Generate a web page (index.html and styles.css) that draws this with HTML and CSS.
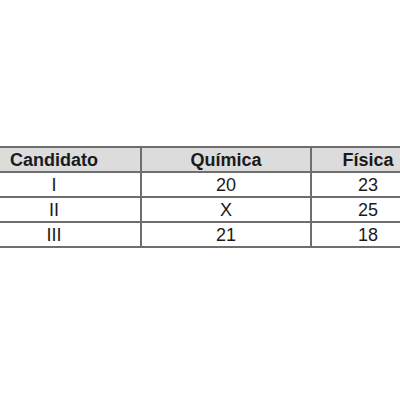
FILE: index.html
```html
<!DOCTYPE html>
<html>
<head>
<meta charset="utf-8">
<link rel="stylesheet" href="styles.css">
</head>
<body>
<div class="page">
<table class="grid">
  <colgroup>
    <col class="c1"><col class="c2"><col class="c3">
  </colgroup>
  <thead>
    <tr><th>Candidato</th><th>Química</th><th>Física</th></tr>
  </thead>
  <tbody>
    <tr><td>I</td><td>20</td><td>23</td></tr>
    <tr><td>II</td><td>X</td><td>25</td></tr>
    <tr><td>III</td><td>21</td><td>18</td></tr>
  </tbody>
</table>
</div>
</body>
</html>
```
FILE: styles.css
```css
html, body {
  margin: 0;
  padding: 0;
  background: #ffffff;
}
.page {
  width: 400px;
  height: 400px;
  padding-top: 146px;
  box-sizing: border-box;
  overflow: hidden;
}
.grid {
  border-collapse: collapse;
  table-layout: fixed;
  width: 458px;
  margin-left: -34px;
  font-family: "Liberation Sans", Arial, sans-serif;
  font-size: 18px;
  color: #1a1a1a;
}
.c1 { width: 174px; }
.c2 { width: 170px; }
.c3 { width: 114px; }
.grid th, .grid td {
  border: 2px solid #6e6e6e;
  height: 23px;
  padding: 0;
  text-align: center;
  vertical-align: middle;
  line-height: 20px;
}
.grid th {
  background: #dcdcdc;
  font-weight: bold;
}
```
